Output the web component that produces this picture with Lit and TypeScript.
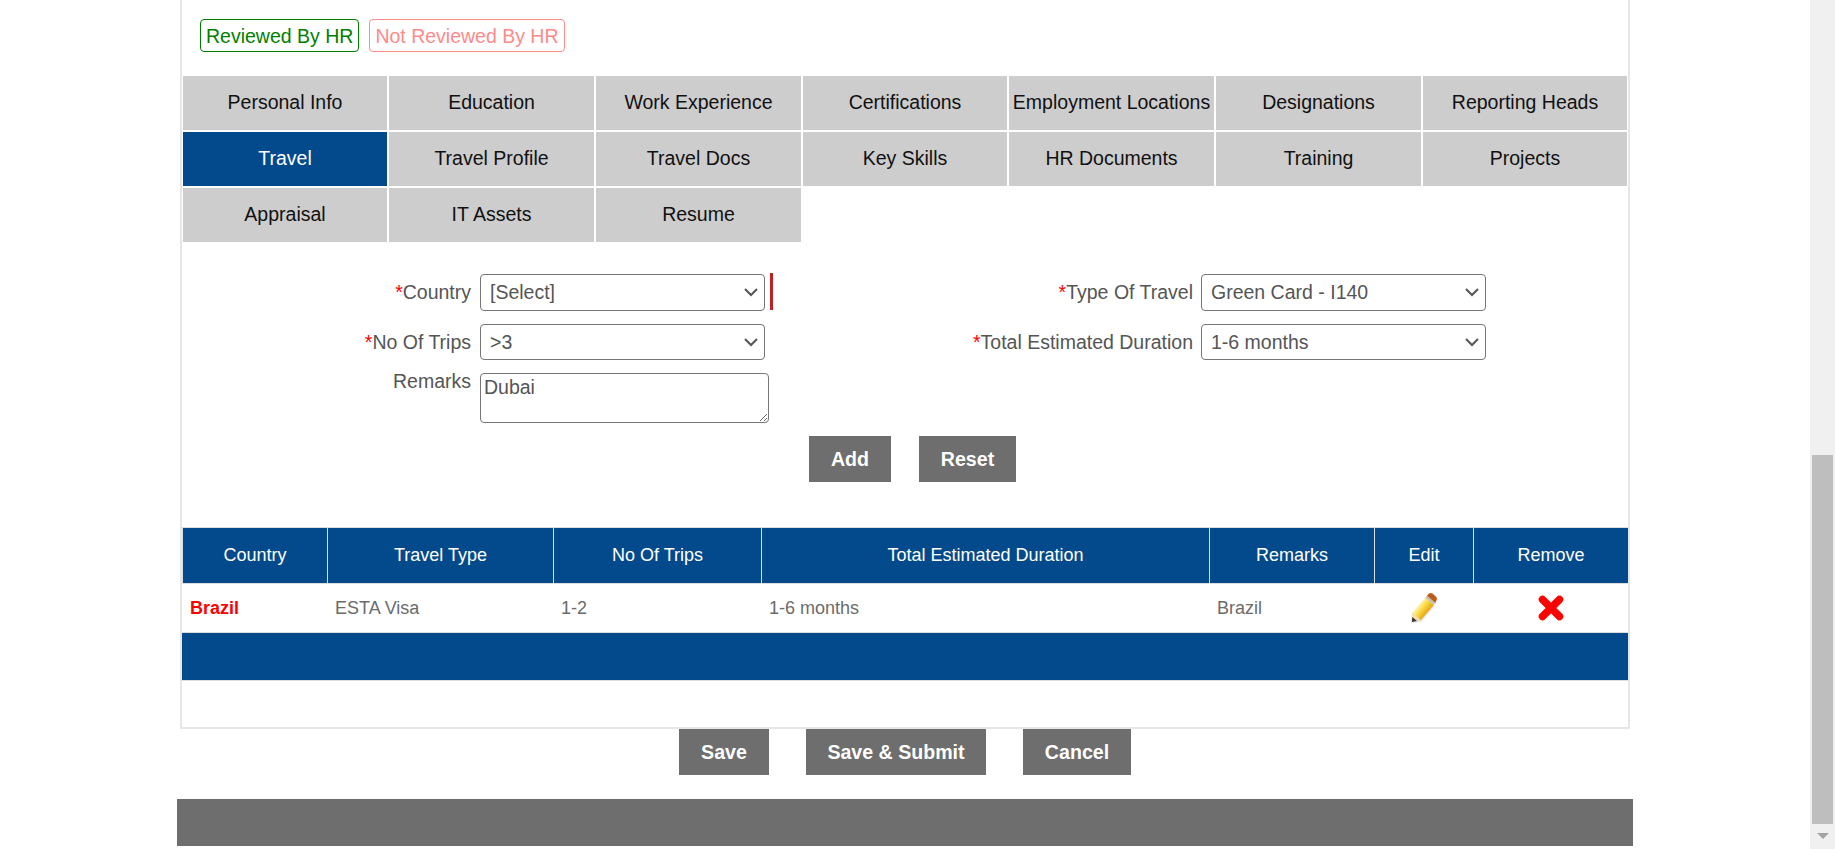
import { LitElement, html, css } from 'lit';
import { customElement } from 'lit/decorators.js';

const TABS = [
  'Personal Info', 'Education', 'Work Experience', 'Certifications', 'Employment Locations', 'Designations', 'Reporting Heads',
  'Travel', 'Travel Profile', 'Travel Docs', 'Key Skills', 'HR Documents', 'Training', 'Projects',
  'Appraisal', 'IT Assets', 'Resume',
];

const COLUMNS = ['Country', 'Travel Type', 'No Of Trips', 'Total Estimated Duration', 'Remarks', 'Edit', 'Remove'];
const COLUMN_WIDTHS = [145, 226, 208, 448, 165, 99, 155];

@customElement('app-root')
export class AppRoot extends LitElement {
  static styles = css`
    :host {
      display: block;
      font-family: 'Liberation Sans', Arial, sans-serif;
    }
    .window {
      display: flex;
      height: 849px;
      overflow: hidden;
      background: #fff;
    }
    .page {
      flex: 1;
      min-width: 0;
    }
    .scrollbar {
      width: 25px;
      height: 849px;
      box-sizing: border-box;
      padding: 455px 2px 0 2px;
      background: #f0f0f0;
    }
    .thumb {
      height: 369px;
      background: #bebebe;
    }
    .arrow {
      width: 0;
      height: 0;
      margin: 9px auto 0;
      border-left: 6px solid transparent;
      border-right: 6px solid transparent;
      border-top: 6px solid #a3a3a3;
    }
    .card {
      box-sizing: border-box;
      width: 1450px;
      height: 729px;
      margin: 0 auto;
      padding-top: 19px;
      border: solid #e6e6e6;
      border-width: 0 2px 2px 2px;
    }
    .legend {
      display: flex;
      gap: 10px;
      height: 33px;
      padding-left: 18px;
      margin-bottom: 24px;
    }
    .badge {
      padding: 1px 5px 0;
      border: 1px solid;
      border-radius: 4px;
      font-size: 19.5px;
      line-height: 30px;
    }
    .badge.ok {
      color: #008000;
    }
    .badge.no {
      color: #ff8a8a;
    }
    .tabs {
      display: grid;
      grid-template-columns: 204px 205px 205px 204px 205px 205px 204px;
      grid-auto-rows: 54px;
      gap: 2px;
      margin-left: 1px;
    }
    .tab {
      padding-bottom: 1px;
      box-sizing: border-box;
      display: flex;
      align-items: center;
      justify-content: center;
      background: #cdcdcd;
      color: #111;
      font-size: 19.5px;
      white-space: nowrap;
    }
    .tab.active {
      background: #034a8c;
      color: #fff;
    }
    .form {
      display: grid;
      grid-template-columns: 289px 293px 411px 285px;
      grid-template-rows: 36.5px 36.5px 50px;
      column-gap: 9px;
      row-gap: 13px;
      margin-top: 32px;
      color: #555;
      font-size: 19.5px;
    }
    .form label {
      text-align: right;
      line-height: 36px;
      white-space: nowrap;
    }
    .form label.top {
      line-height: 17px;
    }
    .form label b {
      color: #f00;
      font-weight: 400;
    }
    .control {
      display: flex;
      gap: 5px;
    }
    .control.far {
      margin-left: -1px;
    }
    .select {
      position: relative;
      height: 36.5px;
    }
    .select svg {
      position: absolute;
      top: 14px;
      right: 7px;
      pointer-events: none;
    }
    select {
      appearance: none;
      box-sizing: border-box;
      width: 285px;
      height: 36.5px;
      padding: 0 9px;
      border: 1px solid #767676;
      border-radius: 4px;
      background: #fff;
      color: #555;
      font: 19.5px 'Liberation Sans', Arial, sans-serif;
    }
    textarea {
      box-sizing: border-box;
      width: 289px;
      height: 50px;
      margin: 0;
      padding: 2px 3px 0;
      border: 1px solid #767676;
      border-radius: 4px;
      color: #555;
      font: 19.5px 'Liberation Sans', Arial, sans-serif;
    }
    .required-bar {
      width: 3px;
      height: 37px;
      margin-top: -1px;
      background: #bf2026;
    }
    .buttons {
      display: flex;
      justify-content: center;
      gap: 28px;
    }
    .form-buttons {
      padding-left: 15px;
      margin-top: 13px;
    }
    .btn {
      box-sizing: border-box;
      height: 46px;
      border: 0;
      padding: 0;
      background: #6d6e6d;
      color: #fff;
      font: bold 19.6px 'Liberation Sans', Arial, sans-serif;
    }
    .btn.add {
      width: 82px;
    }
    .btn.reset {
      width: 97px;
    }
    .btn.save {
      width: 90px;
    }
    .btn.submit {
      width: 180px;
    }
    .btn.cancel {
      width: 108px;
    }
    table {
      width: 1446px;
      margin-top: 45px;
      border-collapse: separate;
      border-spacing: 0;
      table-layout: fixed;
      font-size: 18px;
    }
    th {
      box-sizing: border-box;
      height: 57px;
      padding: 0;
      border: solid #ddd;
      border-width: 1px 0 1px 1px;
      background: #034a8c;
      color: #fff;
      font-weight: 400;
    }
    td {
      box-sizing: border-box;
      height: 49px;
      padding: 0 8px;
      border-bottom: 1px solid #ddd;
      color: #6b6b6b;
    }
    td.name {
      color: #f00;
      font-weight: 700;
    }
    td.icon {
      padding: 0;
      text-align: center;
    }
    td.icon svg {
      display: block;
      margin: 0 auto;
      filter: blur(0.4px);
    }
    .total td {
      height: 48px;
      padding: 0;
      background: #034a8c;
    }
    .page-buttons {
      gap: 37px;
      height: 70px;
    }
    .footer {
      width: 1456px;
      height: 47px;
      margin: 0 auto;
      background: #6d6e6d;
    }
  `;

  render() {
    return html`
      <div class="window">
        <div class="page">
          <section class="card">
            <div class="legend">
              <span class="badge ok">Reviewed By HR</span>
              <span class="badge no">Not Reviewed By HR</span>
            </div>
            <nav class="tabs">
              ${TABS.map((t) => html`<div class="tab ${t === 'Travel' ? 'active' : ''}">${t}</div>`)}
            </nav>
            <div class="form">
              <label><b>*</b>Country</label>
              <div class="control">
                ${this.select('[Select]')}
                <span class="required-bar"></span>
              </div>
              <label><b>*</b>Type Of Travel</label>
              <div class="control far">${this.select('Green Card - I140')}</div>
              <label><b>*</b>No Of Trips</label>
              <div class="control">${this.select('>3')}</div>
              <label><b>*</b>Total Estimated Duration</label>
              <div class="control far">${this.select('1-6 months')}</div>
              <label class="top">Remarks</label>
              <div class="control"><textarea>Dubai</textarea></div>
            </div>
            <div class="buttons form-buttons">
              <button class="btn add">Add</button>
              <button class="btn reset">Reset</button>
            </div>
            <table>
              <colgroup>${COLUMN_WIDTHS.map((w) => html`<col style="width:${w}px" />`)}</colgroup>
              <thead>
                <tr>${COLUMNS.map((c) => html`<th>${c}</th>`)}</tr>
              </thead>
              <tbody>
                <tr>
                  <td class="name">Brazil</td>
                  <td>ESTA Visa</td>
                  <td>1-2</td>
                  <td>1-6 months</td>
                  <td>Brazil</td>
                  <td class="icon">${this.pencil()}</td>
                  <td class="icon">${this.cross()}</td>
                </tr>
                <tr class="total"><td colspan="7"></td></tr>
              </tbody>
            </table>
          </section>
          <div class="buttons page-buttons">
            <button class="btn save">Save</button>
            <button class="btn submit">Save &amp; Submit</button>
            <button class="btn cancel">Cancel</button>
          </div>
          <div class="footer"></div>
        </div>
        <div class="scrollbar">
          <div class="thumb"></div>
          <div class="arrow"></div>
        </div>
      </div>
    `;
  }

  select(value: string) {
    return html`<div class="select">
      <select><option>${value}</option></select>
      <svg width="14" height="9" viewBox="0 0 14 9">
        <path d="M1 1 L7 7 L13 1" fill="none" stroke="#555" stroke-width="2" />
      </svg>
    </div>`;
  }

  pencil() {
    return html`<svg width="28" height="32" viewBox="0 0 28 32">
      <defs>
        <linearGradient id="wood" gradientUnits="userSpaceOnUse" x1="15" y1="6" x2="24" y2="13">
          <stop offset="0" stop-color="#fff2a0" />
          <stop offset="0.45" stop-color="#fbd437" />
          <stop offset="1" stop-color="#e39f10" />
        </linearGradient>
      </defs>
      <path d="M1 31 L2 21 L15 6 L25 14 L11 30 Z" fill="#000" opacity=".1" />
      <path d="M2.3 21 L15.3 5.7 L23.7 12.9 L10.7 28.2 Z" fill="url(#wood)" />
      <path d="M2 30 L2.3 21 L10.7 28.2 Z" fill="#f3dfae" />
      <path d="M2 30 L2.2 24.9 L7 28.9 Z" fill="#333" />
      <path d="M15.3 5.7 L17 3.7 L25.4 10.9 L23.7 12.9 Z" fill="#c9c2b0" />
      <path d="M17 3.7 L19 1.6 Q20.5 0.4 22.5 1.6 L25.8 4.4 Q27.5 6 26.6 8 L25.4 10.9 Z" fill="#bf5a1d" />
    </svg>`;
  }

  cross() {
    return html`<svg width="26" height="26" viewBox="0 0 26 26">
      <path d="M4.5 4.5 L21.5 21.5 M21.5 4.5 L4.5 21.5" stroke="#f00" stroke-width="7.5" stroke-linecap="round" />
    </svg>`;
  }
}
